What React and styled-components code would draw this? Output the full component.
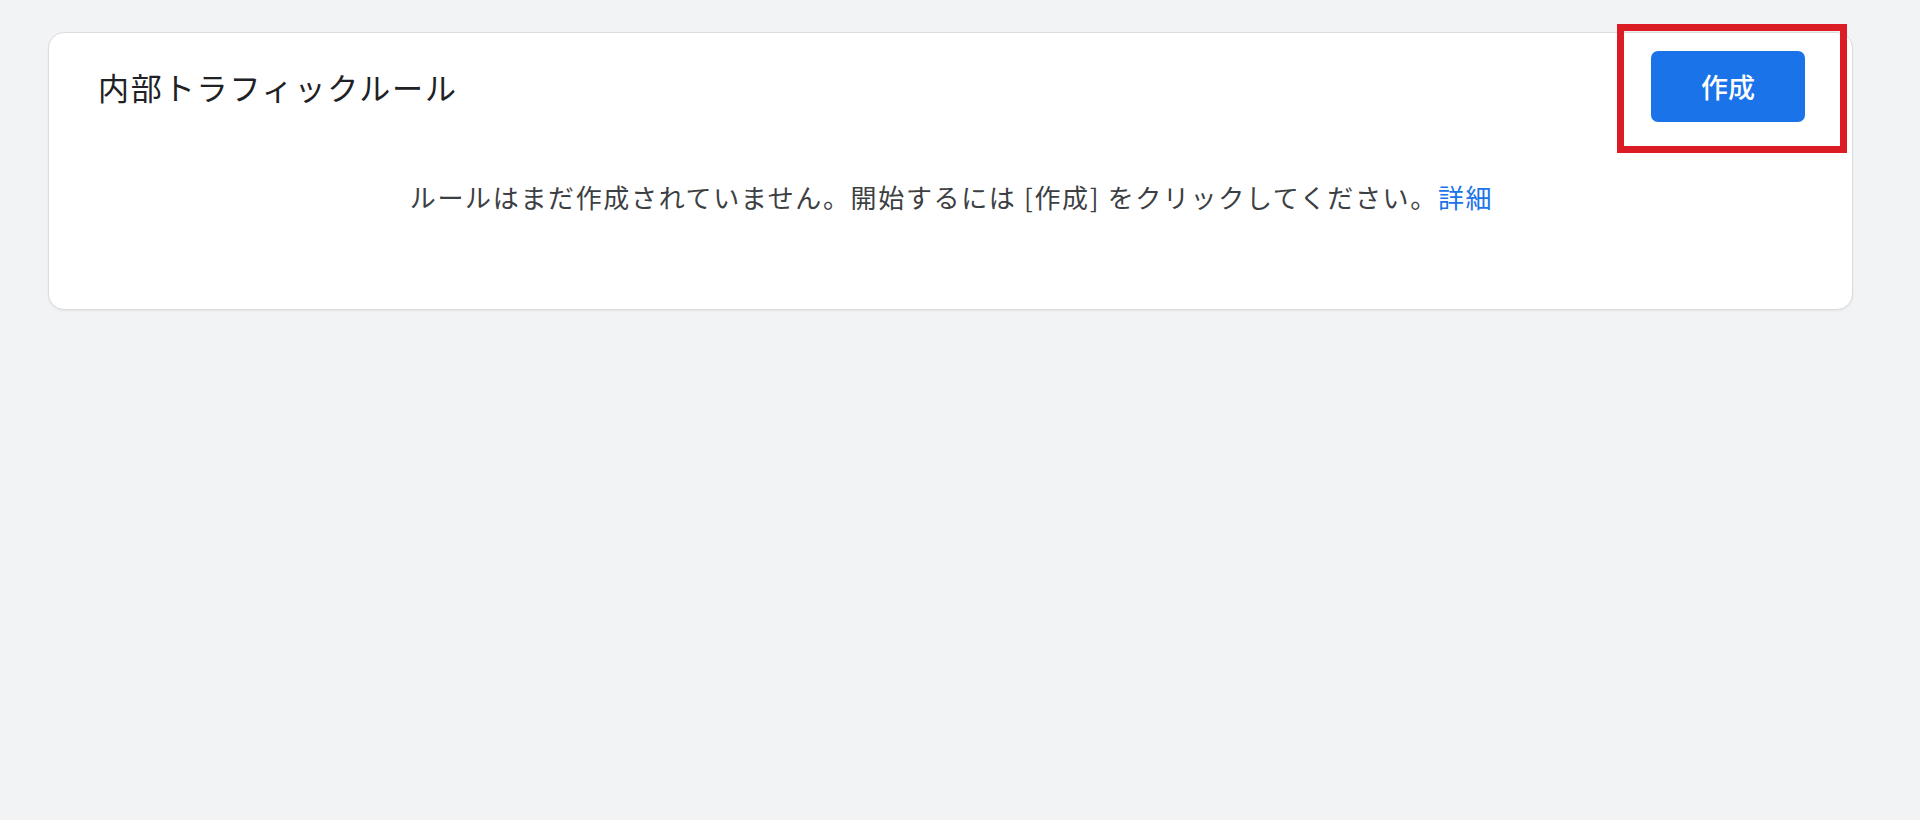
import React from "react";
import styled, { createGlobalStyle } from "styled-components";

const GlobalStyle = createGlobalStyle`
  body {
    margin: 0;
    background-color: #f1f3f4;
    font-family: "Noto Sans CJK JP", "Noto Sans", sans-serif;
  }
`;

const Page = styled.div`
  min-height: 820px;
  padding: 32px 67px 0 48px;
  box-sizing: border-box;
`;

const Card = styled.div`
  background-color: white;
  border: 1px solid #dadce0;
  border-radius: 16px;
  box-shadow: 0 1px 2px rgba(60, 64, 67, 0.08);
  padding: 18px 47px 92px 49px;
  display: flex;
  flex-direction: column;
`;

const Header = styled.div`
  display: flex;
  align-items: center;
  justify-content: space-between;
  height: 71px;
`;

const Title = styled.h2`
  margin: 0;
  font-size: 31px;
  font-weight: 400;
  letter-spacing: 1.85px;
  color: #202124;
`;

const Highlight = styled.div`
  position: relative;
  display: flex;
`;

const Frame = styled.span`
  position: absolute;
  left: -34px;
  right: -42px;
  top: -27px;
  bottom: -31px;
  border: 7px solid #dc1c24;
  pointer-events: none;
`;

const CreateBtn = styled.button`
  width: 154px;
  height: 71px;
  border: none;
  border-radius: 7px;
  background-color: #1a73e8;
  color: white;
  font-family: inherit;
  font-size: 27px;
  font-weight: 500;
  cursor: pointer;
`;

const Empty = styled.p`
  margin: 55px 0 0;
  text-align: center;
  font-size: 26px;
  line-height: 40px;
  letter-spacing: 1.65px;
  color: #3c4043;
`;

const More = styled.a`
  color: #1a73e8;
  text-decoration: none;
  cursor: pointer;
`;

const App = () => {
  return (
    <>
      <GlobalStyle />
      <Page>
        <Card>
          <Header>
            <Title>内部トラフィックルール</Title>
            <Highlight>
              <CreateBtn>作成</CreateBtn>
              <Frame />
            </Highlight>
          </Header>
          <Empty>
            ルールはまだ作成されていません。開始するには [作成] をクリックしてください。
            <More>詳細</More>
          </Empty>
        </Card>
      </Page>
    </>
  );
};

export default App;
